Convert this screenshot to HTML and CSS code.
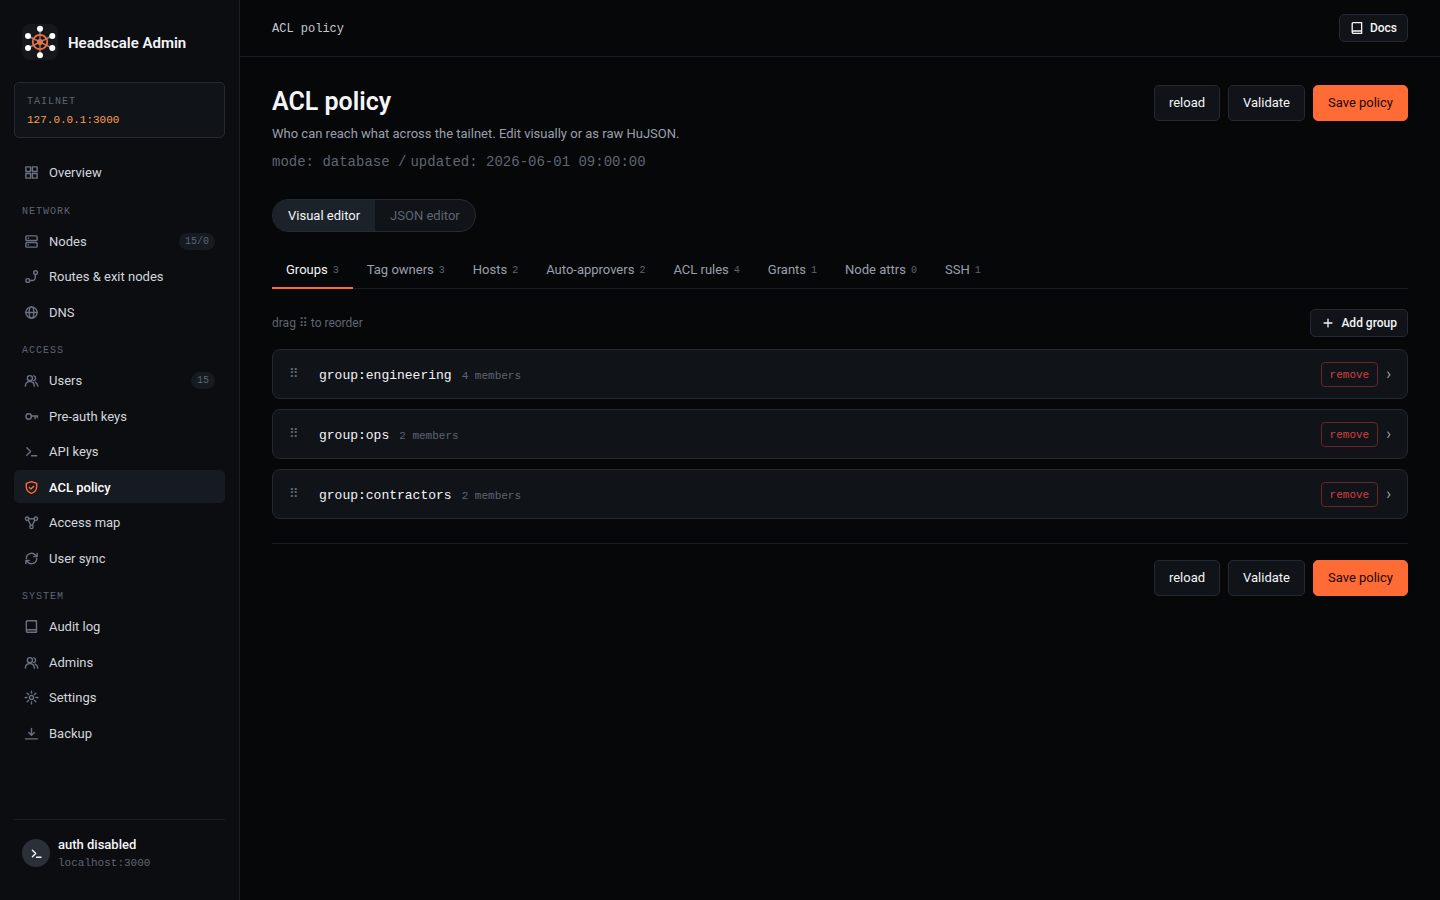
FILE: index.html
```html
<!DOCTYPE html>
<html lang="en">
<head>
<meta charset="utf-8">
<title>ACL policy - Headscale Admin</title>
<link rel="stylesheet" href="styles.css">
</head>
<body>
<svg class="sprite" aria-hidden="true">
  <symbol id="i-grid" viewBox="0 0 16 16"><path d="M2 2h5v5H2zM9 2h5v5H9zM2 9h5v5H2zM9 9h5v5H9z"/></symbol>
  <symbol id="i-server" viewBox="0 0 16 16"><rect x="2" y="2" width="12" height="5" rx="1"/><rect x="2" y="9" width="12" height="5" rx="1"/><path d="M4.500 4.500h.2M4.500 11.500h.2"/></symbol>
  <symbol id="i-route" viewBox="0 0 16 16"><circle cx="4" cy="12.300" r="2"/><circle cx="12.300" cy="3.800" r="2"/><path d="M6 12.300H9a3 3 0 0 0 3-3V5.800"/></symbol>
  <symbol id="i-globe" viewBox="0 0 16 16"><circle cx="8" cy="8" r="6"/><ellipse cx="8" cy="8" rx="2.500" ry="6"/><path d="M2 8h12"/></symbol>
  <symbol id="i-users" viewBox="0 0 16 16"><circle cx="6.300" cy="5.500" r="2.700"/><path d="M1.500 14c0-3 1.900-4.800 4.800-4.800S11 11 11 14M10.500 3a2.600 2.600 0 0 1 0 5M12 9.700c1.600.7 2.500 2.200 2.700 4.300"/></symbol>
  <symbol id="i-key" viewBox="0 0 16 16"><circle cx="5" cy="8" r="2.900"/><path d="M7.900 7.500H14.500M11.800 7.500v3M14.200 7.500v1.800"/></symbol>
  <symbol id="i-term" viewBox="0 0 16 16"><path d="M3 4l4 4-4 4M8 12.500h5.500"/></symbol>
  <symbol id="i-shield" viewBox="0 0 16 16"><path d="M8 1.700l5.500 1.900v4.200c0 3-2.300 5.400-5.500 6.500-3.200-1.100-5.500-3.500-5.500-6.500V3.600zM5.700 8l1.700 1.600 3-3"/></symbol>
  <symbol id="i-map" viewBox="0 0 16 16"><circle cx="3.300" cy="4" r="1.800"/><circle cx="12.700" cy="4" r="1.800"/><circle cx="8" cy="12.700" r="1.800"/><path d="M5.200 4h5.600M4.500 5.500l2.700 5.400M11.500 5.500l-2.700 5.400"/></symbol>
  <symbol id="i-sync" viewBox="0 0 16 16"><path d="M2.500 8A5.500 5.500 0 0 1 12.300 4.500L14 6M14 2.500V6h-3.500M13.500 8A5.500 5.500 0 0 1 3.700 11.500L2 10M2 13.500V10h3.500"/></symbol>
  <symbol id="i-book" viewBox="0 0 16 16"><path d="M2.500 12.600V3A1.200 1.200 0 0 1 3.700 1.800H13.300v12.400H4A1.500 1.500 0 0 1 2.500 12.700 1.500 1.500 0 0 1 4 11.400h9.300"/></symbol>
  <symbol id="i-gear" viewBox="0 0 16 16"><circle cx="8" cy="8" r="2.200"/><path d="M8 1.200v2M8 12.800v2M1.200 8h2M12.800 8h2M3.400 3.400l1.400 1.400M11.200 11.200l1.400 1.400M3.400 12.600l1.400-1.400M11.200 4.800l1.400-1.400"/></symbol>
  <symbol id="i-download" viewBox="0 0 16 16"><path d="M8 2.500v7M5 7l3 3 3-3M1.500 13.700h13"/></symbol>
  <symbol id="i-plus" viewBox="0 0 16 16"><path d="M8 3.500v9M3.500 8h9"/></symbol>
</svg>
<div class="app">
  <aside class="sidebar">
    <div class="brand">
      <svg class="logo" viewBox="0 0 36 36" aria-hidden="true">
        <rect class="logo-bg" width="36" height="36" rx="8"/>
        <path class="logo-spokes" d="M18 5v26M6 12l24 12M30 12L6 24"/>
        <circle class="logo-ring" cx="18" cy="18" r="7.200"/>
        <g class="logo-nodes"><circle cx="18" cy="4.700" r="3"/><circle cx="18" cy="31.300" r="3"/><circle cx="6" cy="12" r="3"/><circle cx="30.300" cy="12" r="3"/><circle cx="6" cy="24" r="3"/><circle cx="30.300" cy="24" r="3"/></g>
        <circle class="logo-core" cx="18" cy="18" r="3"/>
      </svg>
      <span>Headscale Admin</span>
    </div>
    <div class="tailnet">
      <div class="tailnet-label">TAILNET</div>
      <div class="tailnet-host">127.0.0.1:3000</div>
    </div>
    <nav class="nav">
      <a href="#"><svg class="icon"><use href="#i-grid"/></svg>Overview</a>
      <h2>NETWORK</h2>
      <a href="#"><svg class="icon"><use href="#i-server"/></svg>Nodes<span class="pill">15/0</span></a>
      <a href="#"><svg class="icon"><use href="#i-route"/></svg>Routes &amp; exit nodes</a>
      <a href="#"><svg class="icon"><use href="#i-globe"/></svg>DNS</a>
      <h2>ACCESS</h2>
      <a href="#"><svg class="icon"><use href="#i-users"/></svg>Users<span class="pill">15</span></a>
      <a href="#"><svg class="icon"><use href="#i-key"/></svg>Pre-auth keys</a>
      <a href="#"><svg class="icon"><use href="#i-term"/></svg>API keys</a>
      <a href="#" class="active" aria-current="page"><svg class="icon"><use href="#i-shield"/></svg>ACL policy</a>
      <a href="#"><svg class="icon"><use href="#i-map"/></svg>Access map</a>
      <a href="#"><svg class="icon"><use href="#i-sync"/></svg>User sync</a>
      <h2>SYSTEM</h2>
      <a href="#"><svg class="icon"><use href="#i-book"/></svg>Audit log</a>
      <a href="#"><svg class="icon"><use href="#i-users"/></svg>Admins</a>
      <a href="#"><svg class="icon"><use href="#i-gear"/></svg>Settings</a>
      <a href="#"><svg class="icon"><use href="#i-download"/></svg>Backup</a>
    </nav>
    <div class="account">
      <span class="avatar"><svg class="icon"><use href="#i-term"/></svg></span>
      <div>
        <div class="account-name">auth disabled</div>
        <div class="account-host">localhost:3000</div>
      </div>
    </div>
  </aside>
  <div class="main">
    <header class="topbar">
      <span class="crumb">ACL policy</span>
      <a class="btn btn-small" href="#"><svg class="icon"><use href="#i-book"/></svg>Docs</a>
    </header>
    <main class="content">
      <div class="page-head">
        <div>
          <h1>ACL policy</h1>
          <p class="lead">Who can reach what across the tailnet. Edit visually or as raw HuJSON.</p>
          <p class="meta"><span>mode: database /</span><span>updated: 2026-06-01 09:00:00</span></p>
        </div>
        <div class="actions">
          <button class="btn" type="button">reload</button>
          <button class="btn" type="button">Validate</button>
          <button class="btn btn-primary" type="button">Save policy</button>
        </div>
      </div>
      <div class="segmented">
        <button class="on" type="button">Visual editor</button><button type="button">JSON editor</button>
      </div>
      <div class="tabs" role="tablist">
        <button role="tab" aria-selected="true" type="button">Groups<span>3</span></button>
        <button role="tab" type="button">Tag owners<span>3</span></button>
        <button role="tab" type="button">Hosts<span>2</span></button>
        <button role="tab" type="button">Auto-approvers<span>2</span></button>
        <button role="tab" type="button">ACL rules<span>4</span></button>
        <button role="tab" type="button">Grants<span>1</span></button>
        <button role="tab" type="button">Node attrs<span>0</span></button>
        <button role="tab" type="button">SSH<span>1</span></button>
      </div>
      <div class="toolbar">
        <span>drag ⠿ to reorder</span>
        <button class="btn btn-small" type="button"><svg class="icon"><use href="#i-plus"/></svg>Add group</button>
      </div>
      <div class="groups">
        <div class="group"><span class="grip">⠿</span><span class="group-name">group:engineering</span><span class="count">4 members</span><button class="remove" type="button">remove</button><span class="chevron">›</span></div>
        <div class="group"><span class="grip">⠿</span><span class="group-name">group:ops</span><span class="count">2 members</span><button class="remove" type="button">remove</button><span class="chevron">›</span></div>
        <div class="group"><span class="grip">⠿</span><span class="group-name">group:contractors</span><span class="count">2 members</span><button class="remove" type="button">remove</button><span class="chevron">›</span></div>
      </div>
      <div class="page-foot actions">
        <button class="btn" type="button">reload</button>
        <button class="btn" type="button">Validate</button>
        <button class="btn btn-primary" type="button">Save policy</button>
      </div>
    </main>
  </div>
</div>
</body>
</html>
```
FILE: styles.css
```css
:root {
  --bg: #060709;
  --panel: #0b0d11;
  --card: #101318;
  --line: #1b1e25;
  --line-strong: #242a33;
  --text: #f4f5f7;
  --muted: #9aa0ab;
  --dim: #5f6571;
  --accent: #ff6b35;
  --sans: Roboto, Inter, sans-serif;
  --mono: "Liberation Mono", monospace;
}
* { box-sizing: border-box; }
body { margin: 0; background: var(--bg); color: var(--text); font: 13px/1.5 var(--sans); }
h1, h2, p { margin: 0; }
a { color: inherit; text-decoration: none; }
button { font: inherit; color: inherit; cursor: pointer; }
.sprite { display: none; }
.icon { width: 15px; height: 15px; flex: none; fill: none; stroke: currentColor; stroke-width: 1.5; stroke-linecap: round; stroke-linejoin: round; }
.app { display: grid; grid-template-columns: 240px 1fr; min-height: 100vh; }

.sidebar { display: flex; flex-direction: column; background: var(--panel); border-right: 1px solid var(--line); padding: 24px 14px; }
.brand { display: flex; align-items: center; gap: 10px; padding: 0 8px; font-size: 15px; line-height: 24px; font-weight: 600; }
.brand span { padding-top: 2px; }
.logo { width: 36px; height: 36px; }
.logo-bg { fill: #14171c; }
.logo-spokes { fill: none; stroke: #85878b; stroke-width: 1.4; }
.logo-ring { fill: none; stroke: var(--accent); stroke-width: 1.8; }
.logo-nodes { fill: #fff; }
.logo-core { fill: var(--accent); }
.tailnet { margin: 22px 0 17px; padding: 11px 12px 7px; background: var(--card); border: 1px solid var(--line-strong); border-radius: 5px; font-family: var(--mono); }
.tailnet-label { font-size: 10px; line-height: 16px; letter-spacing: 1px; color: var(--dim); }
.tailnet-host { font-size: 11px; line-height: 20px; color: #ff9f4a; }
.nav { display: flex; flex-direction: column; }
.nav a { display: flex; align-items: center; gap: 10px; padding: 8px 10px 6px; margin-bottom: 2px; border-radius: 5px; color: #d3d6dc; }
.nav .icon { color: #6a7180; }
.nav .active { background: #161a21; color: #fff; font-weight: 500; }
.nav .active .icon { color: var(--accent); }
.nav h2 { padding: 13px 8px 5px; font: 10px/15px var(--mono); letter-spacing: 1px; color: var(--dim); }
.pill { margin-left: auto; padding: 0 6px; border-radius: 9px; background: #161a21; font: 10px/17px var(--mono); color: var(--dim); }
.account { display: flex; align-items: center; gap: 8px; margin-top: auto; padding: 14px 8px 6px; border-top: 1px solid var(--line); }
.account > div { padding-top: 2px; }
.account { padding-bottom: 4px; }
.avatar { display: grid; place-items: center; width: 28px; height: 28px; border-radius: 50%; background: #2b3038; }
.avatar .icon { width: 13px; height: 13px; stroke-width: 1.8; }
.account-name { font-weight: 500; line-height: 18px; }
.account-host { font: 11px/18px var(--mono); color: var(--dim); }

.topbar { display: flex; align-items: center; justify-content: space-between; padding: 14px 32px; border-bottom: 1px solid var(--line); }
.crumb { padding-top: 2px; font: 12px/18px var(--mono); color: #c5c8ce; }
.content { padding: 28px 32px; }
.btn { display: inline-flex; align-items: center; justify-content: center; gap: 6px; height: 36px; padding: 0 14px; background: var(--card); border: 1px solid var(--line-strong); border-radius: 5px; color: var(--text); font-size: 13px; }
.btn-small { height: 28px; padding: 0 10px; font-size: 12px; font-weight: 500; }
.btn-small .icon { width: 14px; height: 14px; }
.btn-primary { background: var(--accent); border-color: var(--accent); color: #170802; }
.actions { display: flex; gap: 8px; }
.page-head { display: flex; justify-content: space-between; align-items: flex-start; }
h1 { font-size: 25px; line-height: 34px; font-weight: 600; }
.lead { margin-top: 4px; font-size: 13px; line-height: 22px; color: var(--muted); }
.meta { display: flex; gap: 4px; margin-top: 6px; font: 14px/22px var(--mono); color: var(--dim); }
.segmented { display: inline-flex; margin-top: 26px; background: var(--card); border: 1px solid var(--line-strong); border-radius: 16px; overflow: hidden; }
.segmented button { padding: 1px 15px 0; border: 0; background: none; line-height: 30px; color: var(--dim); }
.segmented .on { background: #1c222a; color: var(--text); }
.tabs { display: flex; margin-top: 17px; border-bottom: 1px solid var(--line); }
.tabs button { display: flex; align-items: center; gap: 5px; margin-bottom: -1px; padding: 10px 14px 7px; border: 0; border-bottom: 2px solid transparent; background: none; line-height: 21px; color: var(--muted); }
.tabs span { font: 10px/18px var(--mono); color: var(--dim); padding-top: 2px; }
.tabs [aria-selected="true"] { color: var(--text); border-color: var(--accent); }
.toolbar { display: flex; justify-content: space-between; align-items: center; margin-top: 20px; font-size: 12px; color: var(--dim); }
.groups { display: grid; gap: 10px; margin-top: 12px; }
.group { display: flex; align-items: center; min-height: 50px; padding: 0 16px; background: var(--card); border: 1px solid var(--line-strong); border-radius: 8px; }
.grip { width: 30px; color: var(--dim); }
.group-name { padding-top: 3px; font: 13px/20px var(--mono); }
.count { margin: 0 auto 0 10px; padding-top: 3px; font: 11px/18px var(--mono); color: var(--dim); }
.remove { padding: 1px 8px 0; background: none; border: 1px solid #692427; border-radius: 4px; font: 11px/22px var(--mono); color: #d63f3f; }
.chevron { margin-left: 8px; font-size: 16px; line-height: 20px; color: var(--muted); }
.page-foot { justify-content: flex-end; margin-top: 24px; padding-top: 16px; border-top: 1px solid var(--line); }
```
